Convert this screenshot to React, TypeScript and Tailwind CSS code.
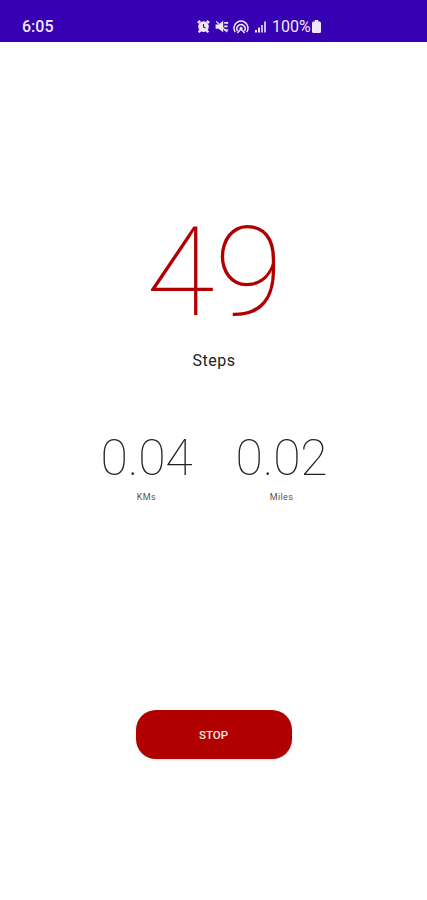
const stats = [
  { value: '0.04', label: 'KMs' },
  { value: '0.02', label: 'Miles' },
];

const AlarmIcon = () => (
  <svg viewBox="0 0 13 13" className="h-[13px] w-[13px]" fill="none" stroke="currentColor">
    <path d="M.8 2.9 3.2.9M12.2 2.9 9.8.9M1.6 12.3l2.2-2.2M11.4 12.3 9.2 10.1" strokeWidth="2.2" />
    <circle cx="6.5" cy="6.6" r="4.6" fill="currentColor" strokeWidth="1.4" />
    <path d="M6.5 3.9v3l2.1 1" stroke="#3700b3" strokeWidth="1.1" />
  </svg>
);

const MuteIcon = () => (
  <svg viewBox="0 0 14 13" className="ml-[5px] h-[13px] w-[14px]" fill="none" stroke="currentColor">
    <path d="M.6 4.4h3L8.2.8v11.4L3.6 8.8h-3z" fill="currentColor" stroke="none" />
    <path d="M9.2 2.8h4M9.2 6.4h3.4M9.2 10h4" strokeWidth="1.7" />
    <path d="M1.2 1.4 12.2 12" strokeWidth="1.3" />
  </svg>
);

const HotspotIcon = () => (
  <svg viewBox="0 0 16 14" className="ml-[4px] h-[14px] w-4" fill="none" stroke="currentColor" strokeWidth="1.5">
    <path d="M2.2 12A7 7 0 1 1 13.8 12" />
    <path d="M4.6 11A4.1 4.1 0 1 1 11.4 11" />
    <circle cx="8" cy="8.3" r="1.5" fill="currentColor" stroke="none" />
    <path d="M4.3 13 8 9l3.7 4" />
  </svg>
);

const SignalIcon = () => (
  <svg viewBox="0 0 12 12" className="ml-[6px] h-3 w-3" fill="currentColor">
    <path d="M0 9h2v2.5H0zM3 6.5h2v5H3z" />
    <path d="M6 4h2v7.5H6zM9 .5h2v11H9z" opacity=".8" />
  </svg>
);

const BatteryIcon = () => (
  <svg viewBox="0 0 9 13" className="ml-[1px] h-[13px] w-[9px]" fill="currentColor">
    <path d="M2.7 0h3.6v1.4h1.2A1.5 1.5 0 0 1 9 2.9v8.6A1.5 1.5 0 0 1 7.5 13h-6A1.5 1.5 0 0 1 0 11.5V2.9a1.5 1.5 0 0 1 1.5-1.5h1.2z" />
  </svg>
);

const StatusBar = () => (
  <header className="flex h-[42px] w-full bg-[#3700b3] pt-[11px] pl-[22px] text-[#eee8fa]">
    <span className="w-[175px] text-[16px] leading-8 font-medium">6:05</span>
    <div className="flex h-[31px] items-center">
      <AlarmIcon />
      <MuteIcon />
      <HotspotIcon />
      <SignalIcon />
      <span className="ml-[5px] text-[16px]">100%</span>
      <BatteryIcon />
    </div>
  </header>
);

const App = () => {
  return (
    <div className="flex h-[900px] w-full flex-col items-center bg-white font-['Roboto',sans-serif] text-black">
      <StatusBar />

      <main className="flex w-full flex-col items-center">
        <h1 className="mt-[156px] ml-[2px] text-[125px] leading-[150px] font-thin text-[#b00000]">49</h1>
        <p className="mt-[1px] ml-[1px] text-[16px] leading-6 tracking-[0.5px] text-[#222]">Steps</p>

        <div className="mt-[55px] ml-[1px] flex gap-[43px]">
          {stats.map((stat) => (
            <div key={stat.label} className="flex flex-col items-center">
              <span className="text-[50px] leading-[60px] font-thin tracking-[-0.2px] text-[#222]">{stat.value}</span>
              <span className="mt-[3px] text-[9px] leading-3 tracking-[0.4px] text-[#555]">{stat.label}</span>
            </div>
          ))}
        </div>

        <button className="mt-[207px] h-[49px] w-[156px] rounded-[20px] bg-[#b00000] pt-[2px] text-[11.5px] font-medium text-[#fbe9e9] shadow-sm">
          STOP
        </button>
      </main>
    </div>
  );
};

export default App;
